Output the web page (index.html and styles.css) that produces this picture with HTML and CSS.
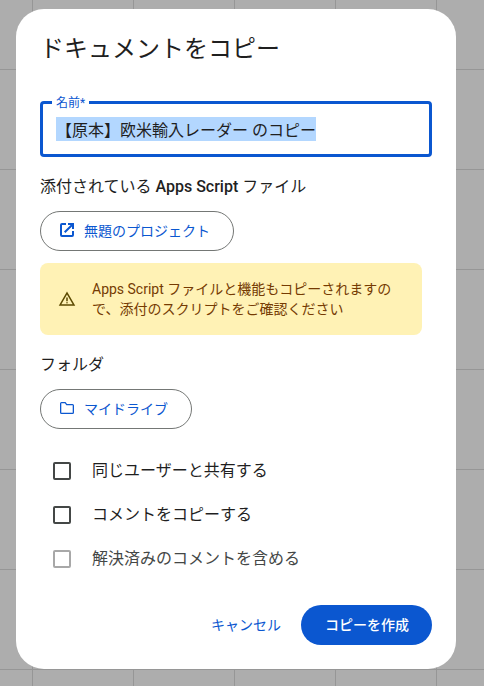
FILE: index.html
```html
<!DOCTYPE html>
<html lang="ja">
<head>
    <meta charset="UTF-8">
    <meta name="viewport" content="width=device-width, initial-scale=1.0">
    <title>ドキュメントをコピー</title>
    <link rel="stylesheet" href="styles.css">
</head>
<body>
    <form class="dialog" id="copy-form">
        <h1>ドキュメントをコピー</h1>

        <div class="field">
            <label for="doc-name">名前*</label>
            <input type="text" id="doc-name" name="name" value="【原本】欧米輸入レーダー のコピー" autocomplete="off" spellcheck="false" required>
        </div>

        <h2>添付されている <span class="product">Apps Script</span> ファイル</h2>
        <button type="button" class="chip">
            <svg class="icon" viewBox="0 0 18 18" aria-hidden="true">
                <path d="M4 15Q2 15 2 13V3Q2 1 4 1H8V3H4V13H14V9H16V13Q16 15 14 15ZM7.400 11 6 9.600 12.600 3H10V1H16V7H14V4.400Z"/>
            </svg>
            無題のプロジェクト
        </button>

        <div class="warning">
            <svg class="icon" viewBox="0 0 24 24" aria-hidden="true">
                <path d="M1 21 12 2l11 19ZM4.450 19h15.100L12 6ZM12 18q.420 0 .710-.290Q13 17.420 13 17t-.290-.710Q12.420 16 12 16t-.710.290Q11 16.580 11 17t.290.710Q11.580 18 12 18Zm-1-3h2v-5h-2Z"/>
            </svg>
            <p>Apps Script ファイルと機能もコピーされますので、添付のスクリプトをご確認ください</p>
        </div>

        <h2>フォルダ</h2>
        <button type="button" class="chip">
            <svg class="icon" viewBox="0 0 18 18" aria-hidden="true">
                <path d="M3.500 14Q2 14 2 12.500V3.500Q2 2 3.500 2H7.500L9 4H14.500Q16 4 16 5.500V12.500Q16 14 14.500 14ZM3.300 12.700H14.700V5.300H8.400L6.900 3.300H3.300Z"/>
            </svg>
            マイドライブ
        </button>

        <div class="options">
            <label><input type="checkbox" name="share">同じユーザーと共有する</label>
            <label><input type="checkbox" name="comments">コメントをコピーする</label>
            <label class="disabled"><input type="checkbox" name="resolved" disabled>解決済みのコメントを含める</label>
        </div>

        <div class="actions">
            <button type="button" class="cancel">キャンセル</button>
            <button type="submit" class="submit">コピーを作成</button>
        </div>
    </form>

    <script>
        const docName = document.getElementById('doc-name');
        const copyForm = document.getElementById('copy-form');

        docName.focus();
        docName.select();

        copyForm.addEventListener('submit', (event) => {
            event.preventDefault();
        });
    </script>
</body>
</html>
```
FILE: styles.css
```css
* {
    box-sizing: border-box;
}

body {
    margin: 0;
    padding: 9px 28px 16px 16px;
    min-height: 100vh;
    font-family: Roboto, 'Noto Sans CJK JP', sans-serif;
    font-size: 16px;
    line-height: 24px;
    color: #1f1f1f;
    background-color: #adadad;
    background-image: linear-gradient(to right, #969696 1px, transparent 1px), linear-gradient(#969696 1px, transparent 1px);
    background-size: 101px 100px;
    background-position: 32px 69px;
}

.dialog {
    max-width: 560px;
    margin: 0 auto;
    padding: 24px;
    border-radius: 28px;
    background: #fff;
}

h1 {
    margin: 0 0 36px;
    font-size: 24px;
    font-weight: 400;
    line-height: 32px;
}

h2 {
    margin: 18px 0 12px;
    font-size: 16px;
    font-weight: 400;
    line-height: 24px;
}

.product {
    font-weight: 500;
}

button,
input {
    font: inherit;
}

button {
    cursor: pointer;
}

.field {
    position: relative;
}

/* label sits on the outline of the text box */
.field label {
    position: absolute;
    top: -6px;
    left: 12px;
    padding: 0 4px;
    font-size: 12px;
    line-height: 16px;
    color: #0b57d0;
    background: #fff;
}

.field input {
    display: block;
    width: 100%;
    height: 56px;
    padding: 0 13px;
    border: 3px solid #0b57d0;
    border-radius: 4px;
    outline: none;
    color: #1f1f1f;
    background: #fff;
}

.field input::selection {
    color: #1f1f1f;
    background: #b3d7ff;
}

.icon {
    flex: none;
    width: 18px;
    height: 18px;
    fill: currentColor;
}

.chip {
    display: flex;
    align-items: center;
    gap: 8px;
    height: 40px;
    padding: 0 23px 0 17px;
    border: 1px solid #747775;
    border-radius: 20px;
    font-size: 14px;
    line-height: 20px;
    color: #0b57d0;
    background: #fff;
}

.warning {
    display: flex;
    align-items: center;
    gap: 16px;
    margin: 12px 10px 0 0;
    padding: 16px 18px;
    border-radius: 8px;
    font-size: 14px;
    line-height: 20px;
    color: #753b03;
    background: #fff2b5;
}

.warning .icon {
    color: #5c4a00;
}

.warning p {
    margin: 0;
}

.options {
    margin: 20px 0 24px;
}

.options label {
    display: flex;
    align-items: center;
    gap: 21px;
    height: 44px;
    padding-left: 13px;
}

.options input {
    appearance: none;
    width: 18px;
    height: 18px;
    margin: 0;
    border: 2px solid #444746;
    border-radius: 2px;
}

.options input:checked {
    border-color: #0b57d0;
    background: #0b57d0;
}

.options .disabled {
    color: #444746;
}

.options input:disabled {
    border-color: #a8a8a8;
}

.actions {
    display: flex;
    justify-content: flex-end;
    gap: 8px;
}

.actions button {
    height: 40px;
    border: none;
    border-radius: 20px;
    font-size: 14px;
    line-height: 20px;
}

.cancel {
    padding: 0 12px;
    color: #0b57d0;
    background: none;
}

.actions .submit {
    padding: 0 23px 0 24px;
    font-weight: 500;
    color: #fff;
    background: #0b57d0;
}
```
